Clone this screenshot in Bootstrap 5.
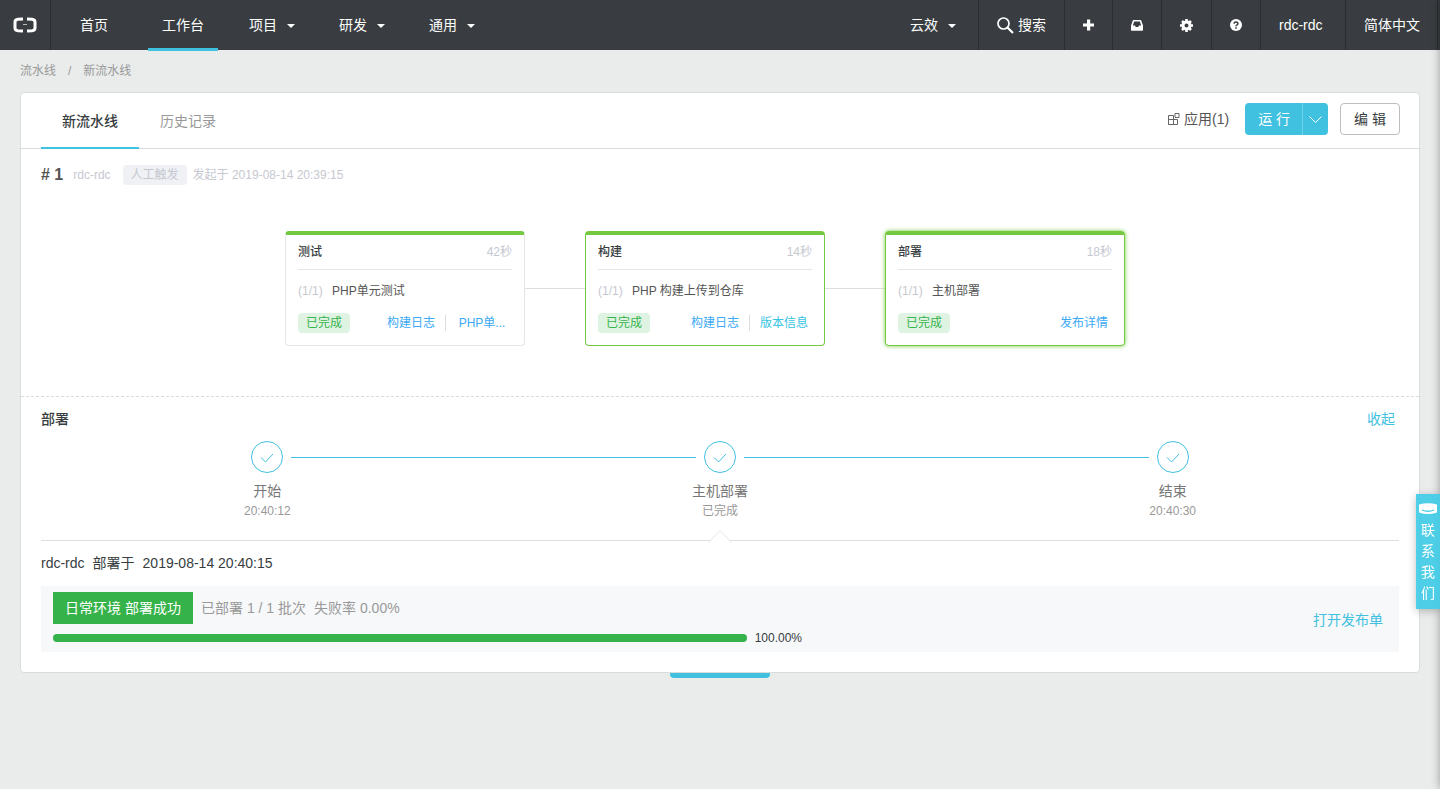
<!DOCTYPE html>
<html lang="zh-CN">
<head>
<meta charset="utf-8">
<meta name="viewport" content="width=device-width, initial-scale=1">
<title>新流水线</title>
<link href="https://cdn.jsdelivr.net/npm/bootstrap@5.3.0/dist/css/bootstrap.min.css" rel="stylesheet">
<style>
:root{--cyan:#40c1df;--green:#35b34a;--stage:#74c941;--line:#d9dcdc;--sky:#3ba9f5}
body{font-family:"Liberation Sans","Noto Sans CJK SC",sans-serif;font-size:14px;line-height:20px;color:#373d41;background:#eaeceb;overflow-x:hidden}
a{text-decoration:none;color:var(--cyan)}
.fs-sm{font-size:12px}
.medium{font-weight:500}
.dim{color:#c6c8d0}
/* top bar */
.topbar{height:50px;background:#393d41}
.topbar a,.topbar button{color:#fff;height:50px;display:flex;align-items:center;background:none;border:0;padding:0;font-size:14px}
.topbar .brand{width:51px;border-right:1px solid #2a2e31;justify-content:center}
.topbar .menu{padding:0 14px;position:relative}
.topbar .first{margin:0 26px 0 15px}
.topbar .menu.current::after{content:"";position:absolute;left:0;right:0;bottom:-1px;height:3px;background:var(--cyan)}
.topbar .dropdown-toggle{padding:0 14px;margin-left:1px}
.topbar .dropdown-toggle::after{border-top:4px solid;border-left:4px solid transparent;border-right:4px solid transparent;margin:2px 0 0 10px}
.topbar .tool{border-left:1px solid #2a2e31;padding:0 18px}
.topbar .user{min-width:85px}
.topbar .edge{border-right:1px solid #2a2e31;padding-right:17px;margin-right:2px}
.page{padding:0 20px}
.crumbs{--bs-breadcrumb-divider-color:#999;--bs-breadcrumb-item-active-color:#999;--bs-breadcrumb-item-padding-x:12px;height:42px;align-items:center;margin:0}
.crumbs a{color:#999}
.panel{border:1px solid var(--line);border-radius:4px;background:#fff}
.panel-head{height:56px;border-bottom:1px solid var(--line);padding:0 19px 0 20px}
.panel-head .tab{display:block;padding:18px 21px 16px;height:56px;border-bottom:2px solid transparent;color:#999}
.panel-head .tab.active{color:#373d41;border-color:var(--cyan);font-weight:500}
.app-link{color:#555}
.btn-run,.btn-edit{height:32px;font-size:14px;line-height:20px;padding:5px 13px;border-radius:4px}
.btn-run,.btn-run:hover{background:var(--cyan);color:#fff;border:0}
.btn-run.arrow{padding:2px 6px 0;border-left:1px solid #6fd1e6}
.btn-edit{border:1px solid #bbbec1;color:#373d41;background:#fff;margin-left:12px}
.run-no{font-size:16px;color:#555}
.run-user{margin:0 12px 0 10px}
.trigger{background:#f0f1f5;border-radius:4px;height:20px;padding:0 8px;margin-right:6px}
/* stages */
.stages{padding:46px 30px 50px 0}
.stage{width:240px;border:1px solid #e4e5e8;border-top:4px solid var(--stage);border-radius:4px;padding:0 12px 12px;font-size:12px}
.stage.done{border-color:var(--stage)}
.stage.selected{box-shadow:0 0 4px var(--stage)}
.stage-head{height:35px;border-bottom:1px solid #e4e5e8}
.stage-job{height:41px;margin-bottom:2px;color:#555}
.stage-count{width:34px}
.pill{background:#dff3e3;color:var(--green);border-radius:4px;padding:0 8px}
.stage-links{padding-right:4px;line-height:16px;margin:2px 0}
.stage-links a{color:var(--sky)}
.stage-links a+a{margin-left:10px;padding-left:10px;border-left:1px solid #dcdee3}
.stage-links .cut{min-width:63px}
.stage-links .info{color:#36c3e3}
.joint{width:60px;height:1px;background:#dcdee3}
/* details */
.details{border-top:1px dashed var(--line);padding:12px 20px 20px}
.wire{height:1px;background:var(--cyan)}
.ring{width:32px;height:32px;border:1px solid var(--cyan);border-radius:50%;margin:0 8px}
.step-name{color:#777;margin-top:8px}
.step-sub{color:#999;font-size:12px;line-height:20px}
.rule-arrow{border-top:1px solid #dcdee3;margin-top:19px;padding-top:12px;position:relative}
.rule-arrow svg{position:absolute;left:50%;top:-12px;margin-left:-12px}
.result{background:#f7f8fa;padding:6px 16px 4px 12px;margin-top:13px}
.result-main{width:calc(50% + 84px)}
.result-note{color:#999}
.env{background:var(--green);color:#fff;height:32px;padding:6px 12px;min-width:140px}
.rate{height:8px;border-radius:4px;--bs-progress-bar-bg:var(--green)}
.handle{width:100px;height:5px;border-radius:0 0 4px 4px;background:var(--cyan);border:0;padding:0}
.contact{top:494px;width:24px;height:115px;padding:9px 5px 0;background:rgba(64,203,230,.92);color:#fff;line-height:21px;box-shadow:0 2px 8px rgba(0,0,0,.25)}
.contact:hover{color:#fff}
.contact svg{margin:0 0 5px -2px}
.drawer{left:100%;width:20px;box-shadow:0 0 10px rgba(0,0,0,.35)}
</style>
</head>
<body>
<nav class="topbar d-flex align-items-center" aria-label="主导航">
  <a class="brand" href="#" aria-label="阿里云"><svg width="24" height="16" viewBox="0 0 24 16" fill="none" stroke="#fff" stroke-width="3"><path d="M10 2 5 2.2Q2 2.5 2 5V11Q2 13.500 5 13.800L10 14M14 2 19 2.200Q22 2.500 22 5V11Q22 13.500 19 13.800L14 14"/><path d="M10 7.500H14" stroke-width="1" stroke="#bbb"/></svg></a>
  <a class="menu first" href="#">首页</a>
  <a class="menu current" href="#">工作台</a>
  <div class="d-flex ms-3">
    <button class="dropdown-toggle" type="button">项目</button>
    <button class="dropdown-toggle ms-3" type="button">研发</button>
    <button class="dropdown-toggle ms-3" type="button">通用</button>
  </div>
  <div class="d-flex ms-auto">
    <button class="dropdown-toggle me-2" type="button">云效</button>
    <button class="tool" type="button"><svg class="me-1" width="17" height="17" viewBox="0 0 17 17" fill="none" stroke="#fff" stroke-width="1.700"><circle cx="6.500" cy="6.500" r="5.500"/><path d="m10.500 10.500 5.500 5.500" stroke-width="2.200"/></svg>搜索</button>
    <button class="tool" type="button" aria-label="新建"><svg width="11" height="12" viewBox="0 0 11 12"><path d="M4 .5h3.200v4H11v3H7.200v4H4v-4H0v-3h4z" fill="#fff"/></svg></button>
    <button class="tool" type="button" aria-label="消息"><svg width="12" height="12" viewBox="0 0 12 12"><path fill="#fff" fill-rule="evenodd" d="M2.500 1h7Q10 1 10.200 1.500L12 6.500V11q0 .7-.7.700H.7Q0 11.700 0 11V6.500L1.800 1.500Q2 1 2.500 1M3.200 2.600 1.800 6.400H4l.7 1.600h2.600L8 6.400h2.200L8.800 2.600z"/></svg></button>
    <button class="tool" type="button" aria-label="设置"><svg width="13" height="13" viewBox="0 0 13 13"><circle cx="6.500" cy="6.500" r="3.500" fill="none" stroke="#fff" stroke-width="3"/><path d="M6.500 0v3M6.500 10v3M0 6.500h3M10 6.500h3M2 2l2 2M9 9l2 2M11 2 9 4M4 9l-2 2" stroke="#fff" stroke-width="2.600"/></svg></button>
    <button class="tool" type="button" aria-label="帮助"><svg width="12" height="12" viewBox="0 0 12 12"><circle cx="6" cy="6" r="6" fill="#fff"/><path d="M4 4.700Q4.200 3 6 3t1.900 1.500Q7.900 5.400 7 5.900 6 6.400 6 7.300" fill="none" stroke="#393d41" stroke-width="1.600"/><path d="M5.200 8.200h1.600v1.500H5.200z" fill="#393d41"/></svg></button>
    <button class="tool user" type="button">rdc-rdc</button>
    <button class="tool edge" type="button">简体中文</button>
  </div>
</nav>

<main class="page">
  <nav aria-label="面包屑">
    <ol class="breadcrumb crumbs fs-sm">
      <li class="breadcrumb-item"><a href="#">流水线</a></li>
      <li class="breadcrumb-item active" aria-current="page">新流水线</li>
    </ol>
  </nav>

  <section class="panel">
    <header class="panel-head d-flex justify-content-between">
      <div class="d-flex">
        <a class="tab active" href="#">新流水线</a>
        <a class="tab" href="#">历史记录</a>
      </div>
      <div class="d-flex align-items-center pb-1">
        <a class="app-link d-flex align-items-center me-3" href="#"><svg class="me-1" width="13" height="13" viewBox="0 0 13 13" fill="none" stroke="#666"><path d="M1.500 3.500h5v9h-5zM1.500 7.500h9v5h-9M6.500 7.500v5M8 1.500h4v4H8z"/></svg>应用(1)</a>
        <div class="btn-group">
          <button class="btn btn-run" type="button">运 行</button>
          <button class="btn btn-run arrow" type="button" aria-label="更多运行选项"><svg class="d-block" width="13" height="7" viewBox="0 0 13 7" fill="none" stroke="#fff"><path d="m.5.500 6 6 6-6"/></svg></button>
        </div>
        <button class="btn btn-edit" type="button">编 辑</button>
      </div>
    </header>

    <div class="d-flex align-items-center px-3 pt-3 ms-1">
      <strong class="run-no"># 1</strong>
      <span class="fs-sm dim d-flex align-items-center"><span class="run-user">rdc-rdc</span><span class="trigger">人工触发</span><span>发起于 2019-08-14 20:39:15</span></span>
    </div>

    <div class="stages d-flex align-items-center justify-content-center">
      <article class="stage">
        <div class="stage-head d-flex justify-content-between align-items-center"><span class="medium">测试</span><span class="dim">42秒</span></div>
        <div class="stage-job d-flex align-items-center"><span class="dim stage-count">(1/1)</span>PHP单元测试</div>
        <div class="d-flex justify-content-between"><span class="pill">已完成</span><span class="stage-links d-flex"><a href="#">构建日志</a><a class="cut text-center" href="#">PHP单...</a></span></div>
      </article>
      <div class="joint"></div>
      <article class="stage done">
        <div class="stage-head d-flex justify-content-between align-items-center"><span class="medium">构建</span><span class="dim">14秒</span></div>
        <div class="stage-job d-flex align-items-center"><span class="dim stage-count">(1/1)</span>PHP 构建上传到仓库</div>
        <div class="d-flex justify-content-between"><span class="pill">已完成</span><span class="stage-links d-flex"><a href="#">构建日志</a><a class="info" href="#">版本信息</a></span></div>
      </article>
      <div class="joint"></div>
      <article class="stage done selected">
        <div class="stage-head d-flex justify-content-between align-items-center"><span class="medium">部署</span><span class="dim">18秒</span></div>
        <div class="stage-job d-flex align-items-center"><span class="dim stage-count">(1/1)</span>主机部署</div>
        <div class="d-flex justify-content-between"><span class="pill">已完成</span><span class="stage-links d-flex"><a href="#">发布详情</a></span></div>
      </article>
    </div>

    <div class="details">
      <div class="d-flex justify-content-between pe-1"><span class="medium">部署</span><a href="#">收起</a></div>
      <div class="row g-0 text-center mt-2 pt-1">
        <div class="col">
          <div class="d-flex align-items-center"><span class="flex-fill"></span><span class="ring d-flex align-items-center justify-content-center"><svg width="14" height="12" viewBox="0 0 14 12" fill="none" stroke="#40c1df"><path d="m1 6.500 4.500 4.500 7.500-8"/></svg></span><span class="wire flex-fill"></span></div>
          <div class="step-name">开始</div><div class="step-sub">20:40:12</div>
        </div>
        <div class="col">
          <div class="d-flex align-items-center"><span class="wire flex-fill"></span><span class="ring d-flex align-items-center justify-content-center"><svg width="14" height="12" viewBox="0 0 14 12" fill="none" stroke="#40c1df"><path d="m1 6.500 4.500 4.500 7.500-8"/></svg></span><span class="wire flex-fill"></span></div>
          <div class="step-name">主机部署</div><div class="step-sub">已完成</div>
        </div>
        <div class="col">
          <div class="d-flex align-items-center"><span class="wire flex-fill"></span><span class="ring d-flex align-items-center justify-content-center"><svg width="14" height="12" viewBox="0 0 14 12" fill="none" stroke="#40c1df"><path d="m1 6.500 4.500 4.500 7.500-8"/></svg></span><span class="flex-fill"></span></div>
          <div class="step-name">结束</div><div class="step-sub">20:40:30</div>
        </div>
      </div>
      <div class="rule-arrow">
        <svg width="24" height="14" viewBox="0 0 24 14"><path d="M1 13 12 1.500 23 13" fill="#fff" stroke="#e6e7eb"/></svg>
        <div class="d-flex gap-2"><span>rdc-rdc</span><span>部署于</span><span>2019-08-14 20:40:15</span></div>
      </div>
      <div class="result d-flex justify-content-between align-items-center">
        <div class="result-main">
          <div class="result-note d-flex align-items-center gap-2"><span class="env text-center">日常环境 部署成功</span><span>已部署 1 / 1 批次</span><span>失败率 0.00%</span></div>
          <div class="d-flex align-items-center gap-2 fs-sm mt-1">
            <div class="progress rate flex-fill" role="progressbar" aria-label="部署进度" aria-valuenow="100" aria-valuemin="0" aria-valuemax="100"><div class="progress-bar" style="width:100%"></div></div>
            <span>100.00%</span>
          </div>
        </div>
        <a href="#">打开发布单</a>
      </div>
    </div>
  </section>
  <button class="handle d-block mx-auto" type="button" aria-label="展开"></button>
</main>

<aside class="drawer position-fixed top-0 bottom-0" aria-hidden="true"></aside>
<a class="contact position-fixed end-0 text-center" href="#"><svg class="d-block" width="18" height="12" viewBox="0 0 18 12"><path d="M0 1.500Q9-1 18 1.500V9.500Q9 12.500 0 9.500z" fill="#fff"/><path d="M3 7q6 2.500 12 0" fill="none" stroke="#40cbe6" stroke-width="1.300"/></svg>联<br>系<br>我<br>们</a>
<script src="https://cdn.jsdelivr.net/npm/bootstrap@5.3.0/dist/js/bootstrap.bundle.min.js"></script>
</body>
</html>
